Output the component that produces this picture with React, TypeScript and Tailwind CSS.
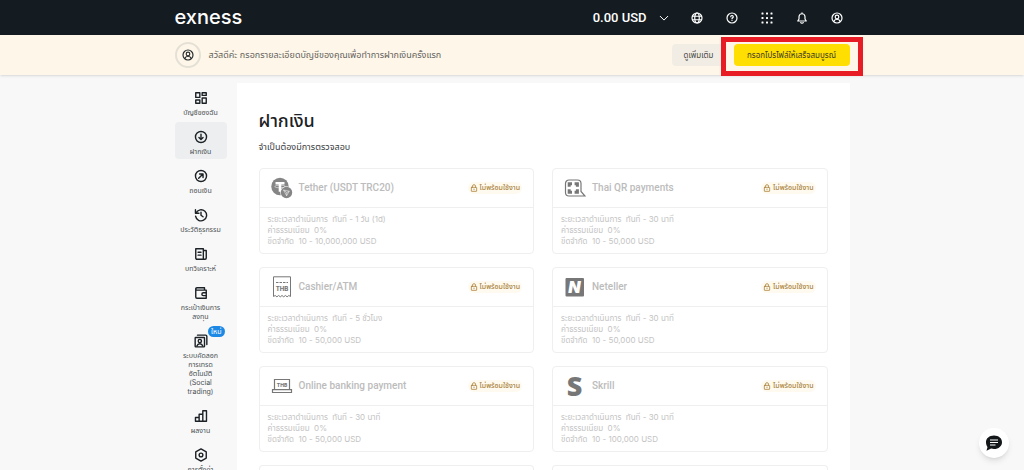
import type { ReactNode } from "react";
import clsx from "clsx";

type IconProps = { children: ReactNode; className?: string };

function Icon({ children, className = "size-3.5" }: IconProps) {
  return (
    <svg
      className={className}
      viewBox="0 0 24 24"
      fill="none"
      stroke="currentColor"
      strokeWidth="2.400"
      strokeLinecap="round"
      strokeLinejoin="round"
      aria-hidden="true"
    >
      {children}
    </svg>
  );
}

const userShape = (
  <>
    <circle cx="12" cy="12" r="10" />
    <circle cx="12" cy="10" r="3.6" />
    <path d="M5.5 19c1-3 3.500-4.500 6.500-4.500s5.500 1.500 6.500 4.500" />
  </>
);

const headerActions = [
  {
    label: "ภาษา",
    icon: (
      <>
        <circle cx="12" cy="12" r="10" />
        <ellipse cx="12" cy="12" rx="4.500" ry="10" />
        <path d="M3 8.500h18M3 15.500h18" />
      </>
    ),
  },
  {
    label: "ช่วยเหลือ",
    icon: (
      <>
        <circle cx="12" cy="12" r="10" />
        <path d="M9.500 9.500a2.500 2.500 0 1 1 3.700 2.200c-.9.500-1.200.9-1.200 1.800M12 16.800v.1" />
      </>
    ),
  },
  {
    label: "แอป",
    icon: (
      <g fill="currentColor" stroke="none">
        {[1, 10, 19].map((y) =>
          [1, 10, 19].map((x) => (
            <rect key={`${x}-${y}`} x={x} y={y} width="4" height="4" rx="1" />
          ))
        )}
      </g>
    ),
  },
  {
    label: "การแจ้งเตือน",
    icon: (
      <path d="M3.500 18h17l-2.500-4V9.500a6 6 0 0 0-12 0V14zM12 1.500v2M9.500 21c.7 2 4.300 2 5 0" />
    ),
  },
  { label: "โปรไฟล์", icon: userShape },
];

const navItems = [
  {
    label: "บัญชีของฉัน",
    icon: (
      <>
        <rect x="3" y="3" width="7" height="8" />
        <rect x="14" y="3" width="7" height="4.500" />
        <rect x="3" y="15.500" width="7" height="5.500" />
        <rect x="14" y="12" width="7" height="9" />
      </>
    ),
  },
  {
    label: "ฝากเงิน",
    active: true,
    icon: (
      <>
        <circle cx="12" cy="12" r="9.500" />
        <path d="M12 7v9M8.500 13l3.500 3.500 3.500-3.500" />
      </>
    ),
  },
  {
    label: "ถอนเงิน",
    icon: (
      <>
        <circle cx="12" cy="12" r="9.500" />
        <path d="M8 16l7.500-7.500M9.500 8.500h6v6" />
      </>
    ),
  },
  {
    label: "ประวัติธุรกรรม",
    icon: (
      <>
        <path d="M3.500 8.500A9.500 9.500 0 1 1 2.700 14M2.500 3v6h6" />
        <path d="M12 7v5.500l3.500 2.500" />
      </>
    ),
  },
  {
    label: "บทวิเคราะห์",
    icon: (
      <>
        <path d="M3 3h13v18H5a2 2 0 0 1-2-2zM16 6h5v13a2 2 0 0 1-2 2h-3" />
        <path d="M7 9h5M7 14h5" />
      </>
    ),
  },
  {
    label: "กระเป๋าเงินการ\nลงทุน",
    icon: (
      <>
        <path d="M18 7V3H5a2 2 0 0 0-2 2v14a2 2 0 0 0 2 2h16V7H5a2 2 0 0 1-2-2" />
        <path d="M21 11.500h-5a2.500 2.500 0 0 0 0 5h5" />
      </>
    ),
  },
  {
    label: "ระบบคัดลอก\nการเทรด\nอัตโนมัติ\n(Social\ntrading)",
    badge: "ใหม่",
    icon: (
      <>
        <rect x="2" y="6" width="16" height="16" rx="1" />
        <path d="M6 2h14a2 2 0 0 1 2 2v14" />
        <circle cx="10" cy="12" r="2.800" />
        <path d="M5 20.500c.8-2.500 2.600-3.700 5-3.700s4.200 1.200 5 3.700" />
      </>
    ),
  },
  {
    label: "ผลงาน",
    icon: <path d="M2.500 14.500h6.300v6.500H2.500zM8.800 9h6.300v12H8.800zM15.100 3h6.300v18h-6.300z" />,
  },
  {
    label: "การตั้งค่า",
    icon: (
      <>
        <path d="M12 1.500l9 5.200v10.600l-9 5.200-9-5.200V6.700z" />
        <circle cx="12" cy="12" r="3.200" />
      </>
    ),
  },
];

function TetherLogo() {
  return (
    <svg viewBox="0 0 22 22" className="size-[22px]" aria-hidden="true">
      <circle cx="9" cy="9.500" r="8.700" fill="#858585" />
      <path d="M4.500 5h9v2.600h-3.200v7.200H7.700V7.600H4.500z" fill="#fff" />
      <ellipse cx="9" cy="9.500" rx="5.300" ry="1.300" fill="none" stroke="#fff" strokeWidth=".5" />
      <circle cx="15.500" cy="15.500" r="6.300" fill="#fff" />
      <circle cx="15.500" cy="15.500" r="5.700" fill="#858585" />
      <path d="M12.500 13l5.800 1.200-2.700 4.500zM12.500 13l3.300 2.500 2.500-1.300M15.800 15.500l-.2 3.200" fill="none" stroke="#fff" strokeWidth=".5" />
    </svg>
  );
}

function QrLogo() {
  return (
    <svg viewBox="0 0 22 22" className="size-[22px]" fill="none" stroke="#777" aria-hidden="true">
      <path d="M5 3h8.500a3.500 3.500 0 0 1 3.500 3.500v8l4 4.500H5a3.500 3.500 0 0 1-3.500-3.500v-9A3.500 3.500 0 0 1 5 3z" strokeWidth="1.200" />
      <path d="M5.200 9.700V6.700h2.800M10.600 6.700h2.800v3M5.200 12.300v3h2.800M10.600 15.300h2.800v-3" strokeWidth="3" />
    </svg>
  );
}

function AtmLogo() {
  return (
    <svg viewBox="0 0 22 22" className="size-[22px]" aria-hidden="true">
      <path
        d="M2.500 20.500V.8h17v19.700l-1.700-1-1.700 1.300-1.700-1.300-1.700 1.300L11 19.500l-1.700 1.300-1.700-1.300-1.700 1.300-1.700-1.300z"
        fill="none"
        stroke="#777"
      />
      <path d="M5 6.500h12" stroke="#777" strokeDasharray="2.500 1" />
      <text x="11" y="15" textAnchor="middle" fontSize="6" fontWeight="800" fill="#777">THB</text>
    </svg>
  );
}

function BankLogo() {
  return (
    <svg viewBox="0 0 22 22" className="size-[22px]" fill="none" stroke="#777" strokeWidth="1.200" aria-hidden="true">
      <path d="M3.500 14.500v-10h15v10M1.500 14.700h19v2.800h-19z" />
      <text x="11" y="11.500" textAnchor="middle" fontSize="5" fontWeight="800" fill="#777" stroke="none">THB</text>
    </svg>
  );
}

function NetellerLogo() {
  return (
    <svg viewBox="0 0 22 22" className="size-[22px]" aria-hidden="true">
      <rect x="1.500" y="2" width="18.500" height="18.500" rx="1" fill="#777" />
      <text x="10.500" y="17" textAnchor="middle" fontSize="16" fontWeight="900" fontStyle="italic" fill="#fff">N</text>
    </svg>
  );
}

function SkrillLogo() {
  return (
    <svg viewBox="0 0 22 22" className="size-[22px] overflow-visible" aria-hidden="true">
      <text x="10.500" y="20.500" textAnchor="middle" fontSize="27" fontWeight="800" fill="#777" className="font-['Open_Sans',sans-serif]">S</text>
    </svg>
  );
}

const methods = [
  { name: "Tether (USDT TRC20)", logo: <TetherLogo />, time: "ทันที - 1 วัน (1d)", limit: "10 - 10,000,000 USD" },
  { name: "Thai QR payments", logo: <QrLogo />, time: "ทันที - 30 นาที", limit: "10 - 50,000 USD" },
  { name: "Cashier/ATM", logo: <AtmLogo />, time: "ทันที - 5 ชั่วโมง", limit: "10 - 50,000 USD" },
  { name: "Neteller", logo: <NetellerLogo />, time: "ทันที - 30 นาที", limit: "10 - 50,000 USD" },
  { name: "Online banking payment", logo: <BankLogo />, time: "ทันที - 30 นาที", limit: "10 - 50,000 USD" },
  { name: "Skrill", logo: <SkrillLogo />, time: "ทันที - 30 นาที", limit: "10 - 100,000 USD" },
];

function Header() {
  return (
    <header className="bg-[#151c21] text-white">
      <div className="mx-auto flex h-[35px] max-w-[675px] items-center justify-between">
        <a href="#" className="pb-0.5 text-[20px] leading-5 font-medium">
          exness
        </a>
        <div className="flex items-center gap-[21px] pr-1.5">
          <button className="flex items-center gap-3 font-[Roboto,sans-serif] text-[13px] font-medium">
            0.00 USD
            <Icon className="size-2.5">
              <path d="M3 8l9 9 9-9" />
            </Icon>
          </button>
          {headerActions.map((action) => (
            <button key={action.label} aria-label={action.label} className="px-px">
              <Icon className="size-3">{action.icon}</Icon>
            </button>
          ))}
        </div>
      </div>
    </header>
  );
}

function ProfileBanner() {
  return (
    <div className="bg-[#fef7e9] shadow-sm">
      <div className="mx-auto flex h-10 max-w-[675px] items-center justify-between">
        <div className="flex items-center gap-2">
          <span className="flex size-[26px] items-center justify-center rounded-full border-2 border-[#e5e0d5] text-[#2b2f31]">
            <Icon className="size-3">{userShape}</Icon>
          </span>
          <p className="text-[9px] text-[#64625d]">
            สวัสดีค่ะ กรอกรายละเอียดบัญชีของคุณเพื่อทำการฝากเงินครั้งแรก
          </p>
        </div>
        <div className="flex gap-2">
          <button className="h-[22px] rounded-sm bg-[#f1ede4] px-3 text-[8px] text-[#4a4945]">
            ดูเพิ่มเติม
          </button>
          <div className="relative flex">
            <button className="h-[22px] w-[116px] rounded-sm bg-[#ffde02] text-[8px] whitespace-nowrap text-[#3c3a20]">
              กรอกโปรไฟล์ให้เสร็จสมบูรณ์
            </button>
            {/* highlight frame around the primary action */}
            <span className="pointer-events-none absolute -inset-x-[13px] -top-[7px] -bottom-2.5 border-5 border-[#e71c24]" />
          </div>
        </div>
      </div>
    </div>
  );
}

function Sidebar() {
  return (
    <nav className="flex w-[52px] shrink-0 flex-col gap-0.5">
      {navItems.map((item) => (
        <a
          key={item.label}
          href="#"
          className={clsx(
            "relative flex flex-col items-center gap-[3px] rounded-sm pt-2 pb-[3px] text-center text-[7px] leading-[9px] text-[#4b5053]",
            item.active && "bg-[#eceeef]"
          )}
        >
          <Icon className="size-3.5 text-[#1b2125]">{item.icon}</Icon>
          <span className="whitespace-pre-line">{item.label}</span>
          {item.badge && (
            <span className="absolute top-0 right-0.5 rounded-full bg-[#1e88e5] px-[3px] text-[7px] leading-[11px] text-white">
              {item.badge}
            </span>
          )}
        </a>
      ))}
    </nav>
  );
}

function MethodCard({ name, logo, time, limit }: (typeof methods)[number]) {
  return (
    <article className="rounded-sm border border-[#efefef]">
      <div className="flex h-[39px] items-center gap-1.5 border-b border-[#efefef] px-[11px]">
        {logo}
        <h2 className="flex-1 pb-0.5 font-[Roboto,sans-serif] text-[10px] font-medium text-[#bcbcbc]">{name}</h2>
        <span className="flex items-center gap-0.5 rounded-full bg-[#fffaf0] px-0.5 text-[7px] leading-3 font-medium text-[#a8823a]">
          <Icon className="size-2">
            <rect x="4" y="10" width="16" height="12" rx="1" />
            <path d="M7.500 10V6.500a4.500 4.500 0 0 1 9 0V10M12 15v2" />
          </Icon>
          ไม่พร้อมใช้งาน
        </span>
      </div>
      <div className="px-2 py-1.5 text-[8px] leading-[11px] text-[#c4c4c4]">
        <p>ระยะเวลาดำเนินการ&nbsp; {time}</p>
        <p>ค่าธรรมเนียม&nbsp; 0%</p>
        <p>ขีดจำกัด&nbsp; {limit}</p>
      </div>
    </article>
  );
}

export default function App() {
  return (
    <div className="min-h-screen bg-[#f8f8f8] font-[Inter,'Noto_Sans_Thai','Noto_Sans',sans-serif]">
      <Header />
      <ProfileBanner />
      <div className="mx-auto flex max-w-[675px] gap-2.5 pt-2">
        <Sidebar />
        <main className="flex-1 bg-white px-[22px] pt-6">
          <h1 className="text-[18px] leading-7 font-medium text-[#1b2125]">ฝากเงิน</h1>
          <p className="mt-1.5 text-[9px] leading-3 text-[#3b4043]">จำเป็นต้องมีการตรวจสอบ</p>
          <div className="mt-[15px] grid grid-cols-2 gap-x-[18px] gap-y-[13px]">
            {methods.map((method) => (
              <MethodCard key={method.name} {...method} />
            ))}
            <div className="h-10 rounded-t-sm border border-b-0 border-[#efefef]" />
            <div className="h-10 rounded-t-sm border border-b-0 border-[#efefef]" />
          </div>
        </main>
      </div>
      <button
        aria-label="แชท"
        className="fixed right-[15px] bottom-3 flex size-[30px] items-center justify-center rounded-full bg-white shadow-md"
      >
        <svg viewBox="0 0 18 18" className="size-[18px]" aria-hidden="true">
          <path d="M9 1.500c4.600 0 8 2.800 8 6.700S13.600 15 9 15c-1 0-2-.1-2.900-.4L1.500 16.800l1-3.800C1.500 11.700 1 10 1 8.200c0-3.900 3.400-6.700 8-6.700z" fill="#14181b" />
          <path d="M5 6h8M5 8.500h8M5 11h5.500" stroke="#fff" />
        </svg>
      </button>
    </div>
  );
}
